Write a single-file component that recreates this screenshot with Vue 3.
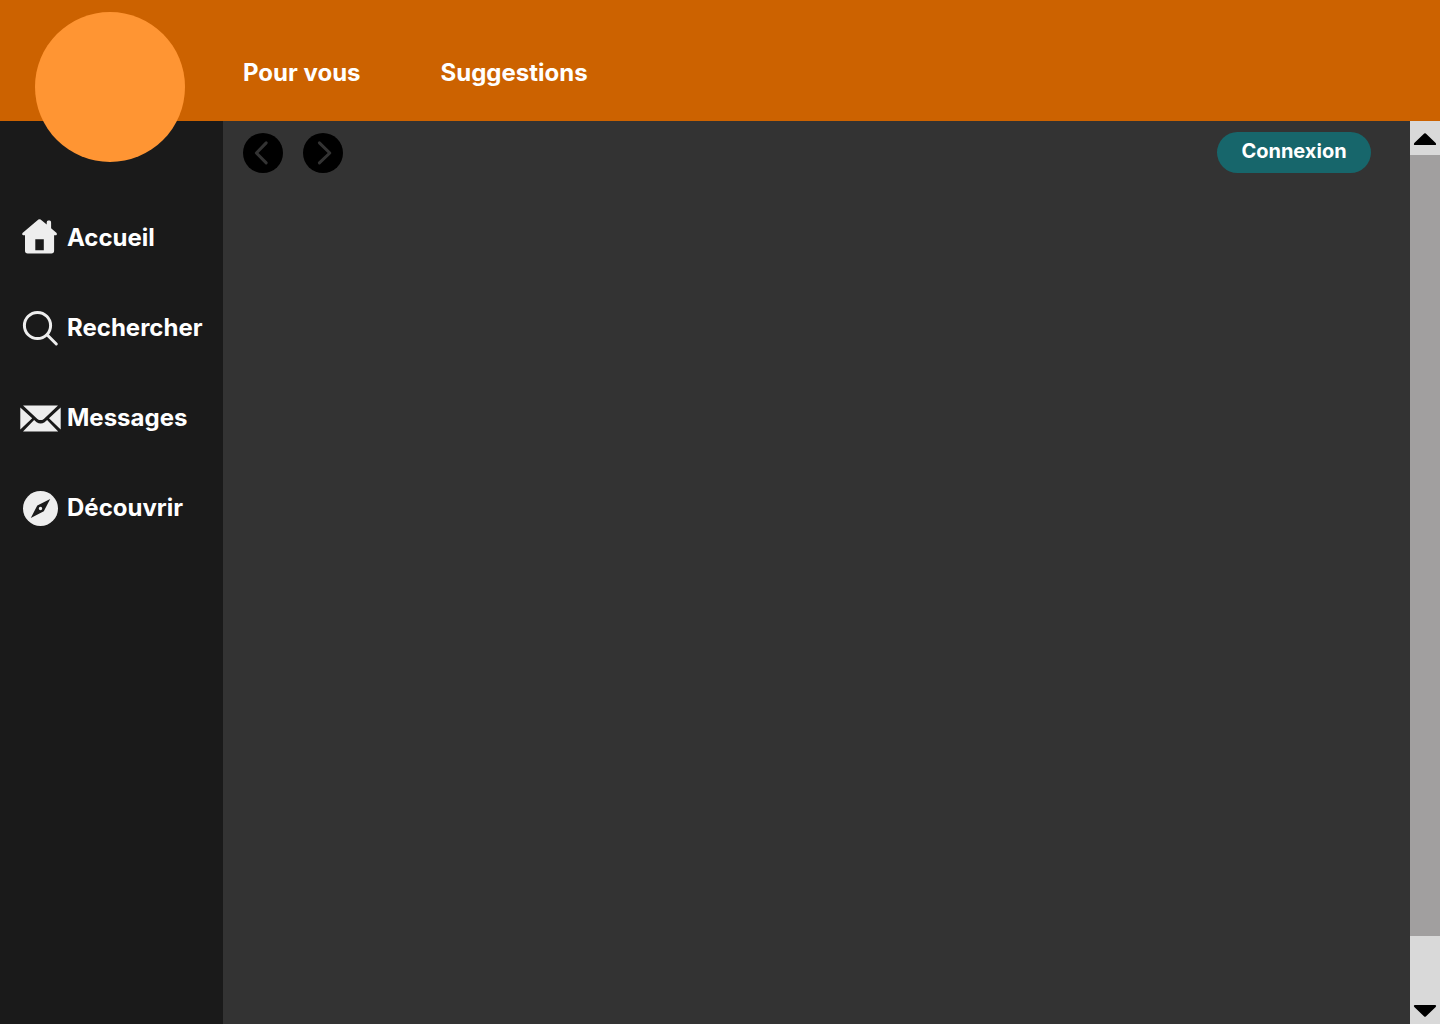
<script setup>
const tabs = ['Pour vous', 'Suggestions']

const links = [
  { label: 'Accueil', icon: 'home' },
  { label: 'Rechercher', icon: 'search' },
  { label: 'Messages', icon: 'mail' },
  { label: 'Découvrir', icon: 'compass' },
]
</script>

<template>
  <div class="app">
    <header class="header">
      <a href="#" class="logo" aria-label="Accueil du site"></a>
      <nav class="tabs" aria-label="Sections">
        <a v-for="tab in tabs" :key="tab" href="#" class="tab">{{ tab }}</a>
      </nav>
    </header>

    <div class="body">
      <nav class="sidebar" aria-label="Menu principal">
        <a v-for="link in links" :key="link.label" href="#" class="link">
          <svg v-if="link.icon === 'home'" class="icon" viewBox="0 0 41 40" aria-hidden="true">
            <path
              fill="#eee"
              fill-rule="evenodd"
              d="M18.4 1.6Q19.5 .7 20.6 1.6L26.7 6.6V4.5Q26.7 2.6 28.2 2.6H29.7Q31.1 2.6 31.1 4.5V10.3L36.6 14.9Q37.6 16.2 36.2 17.3H34.1V32.8Q34.1 35.5 31.4 35.5H7.7Q5 35.5 5 32.8V17.3H3Q1.4 16.2 2.5 14.9ZM15.3 21.2V32.2H23.8V21.2Z"
            />
          </svg>
          <svg v-else-if="link.icon === 'search'" class="icon" viewBox="0 1 41 40" aria-hidden="true">
            <circle cx="17.5" cy="18.5" r="13.1" fill="none" stroke="#eee" stroke-width="3" />
            <path d="M27.3 28L36.3 37" fill="none" stroke="#eee" stroke-width="3" stroke-linecap="round" />
          </svg>
          <svg v-else-if="link.icon === 'mail'" class="icon" viewBox="0 1 41 40" aria-hidden="true">
            <path
              fill="#eee"
              d="M3 8.5H38L23.8 21.9Q20.6 24.3 17.4 21.9ZM.3 10.4L12.2 21.3L.3 32.5ZM40.7 10.4L29 21.3L40.7 32.5ZM14.1 23L16.6 25.2Q20.6 28 24.6 25.2L27.1 23L38.2 34.5H3Z"
            />
          </svg>
          <svg v-else class="icon" viewBox="0 1 41 40" aria-hidden="true">
            <circle cx="20.5" cy="21.5" r="17.5" fill="#eee" />
            <path
              fill="#1a1a1a"
              fill-rule="evenodd"
              d="M30.2 11.9L23.8 24.3L10.8 31.1L17.3 18.4ZM20.5 19.8A1.7 1.7 0 1 0 20.5 23.2A1.7 1.7 0 1 0 20.5 19.8Z"
            />
          </svg>
          <span>{{ link.label }}</span>
        </a>
      </nav>

      <main class="content">
        <div class="toolbar">
          <button type="button" class="round" aria-label="Précédent">
            <svg viewBox="0 0 40 40" aria-hidden="true"><path d="M23.2 9.9L13.4 20L23.2 29.9" /></svg>
          </button>
          <button type="button" class="round" aria-label="Suivant">
            <svg viewBox="0 0 40 40" aria-hidden="true"><path d="M16.4 9.9L26.8 20L16.4 29.9" /></svg>
          </button>
          <button type="button" class="login">Connexion</button>
        </div>
      </main>

      <div class="scrollbar">
        <button type="button" class="step" aria-label="Défiler vers le haut">
          <svg viewBox="0 0 30 34" aria-hidden="true">
            <path d="M14.2 12.6Q15 11.8 15.8 12.6L25.7 22Q26.8 24 25 24H5Q3.2 24 4.3 22Z" />
          </svg>
        </button>
        <div class="track"><div class="thumb"></div></div>
        <button type="button" class="step" aria-label="Défiler vers le bas">
          <svg viewBox="0 0 30 34" aria-hidden="true">
            <path d="M14.2 26.4Q15 27.2 15.8 26.4L25.7 17Q26.8 15 25 15H5Q3.2 15 4.3 17Z" />
          </svg>
        </button>
      </div>
    </div>
  </div>
</template>

<style>
body {
  margin: 0;
}
</style>

<style scoped>
.app {
  display: flex;
  flex-direction: column;
  min-height: 100vh;
  background: #333;
  font-family: Inter, "Liberation Sans", sans-serif;
  font-size: 24px;
  font-weight: 700;
  line-height: 30px;
  color: #fff;
}

a {
  color: inherit;
  text-decoration: none;
}

button {
  padding: 0;
  border: 0;
  font: inherit;
  color: inherit;
  cursor: pointer;
}

svg {
  display: block;
}

.header {
  position: relative;
  display: flex;
  align-items: flex-end;
  box-sizing: border-box;
  height: 121px;
  padding: 0 24px 33px 243px;
  background: #cc6200;
}

/* The badge hangs over the sidebar below the header */
.logo {
  position: absolute;
  top: 12px;
  left: 35px;
  width: 150px;
  height: 150px;
  border-radius: 50%;
  background: #ff9533;
}

.tabs {
  display: flex;
  gap: 80px;
}

.body {
  display: flex;
  flex: 1;
}

.sidebar {
  display: flex;
  flex-direction: column;
  gap: 50px;
  flex: none;
  box-sizing: border-box;
  width: 223px;
  padding: 97px 0 40px 20px;
  background: #1a1a1a;
}

.link {
  display: flex;
  align-items: center;
  gap: 6px;
}

.icon {
  flex: none;
  width: 41px;
  height: 40px;
}

.content {
  flex: 1;
}

.toolbar {
  display: flex;
  align-items: center;
  gap: 20px;
  padding: 11px 39px 0 20px;
}

.round {
  width: 40px;
  height: 40px;
  border-radius: 50%;
  background: #000;
}

.round path {
  fill: none;
  stroke: #333;
  stroke-width: 3;
  stroke-linecap: round;
  stroke-linejoin: round;
}

.login {
  width: 154px;
  height: 41px;
  margin-left: auto;
  padding-bottom: 4px;
  border-radius: 21px;
  background: #17666b;
  font-size: 20px;
}

.scrollbar {
  display: flex;
  flex-direction: column;
  flex: none;
  width: 30px;
  background: #d9d9d9;
}

.step {
  height: 34px;
  background: #d9d9d9;
}

.track {
  display: flex;
  flex-direction: column;
  flex: 1;
}

.thumb {
  flex: 0 0 93.5%;
  background: #a19f9f;
}
</style>
